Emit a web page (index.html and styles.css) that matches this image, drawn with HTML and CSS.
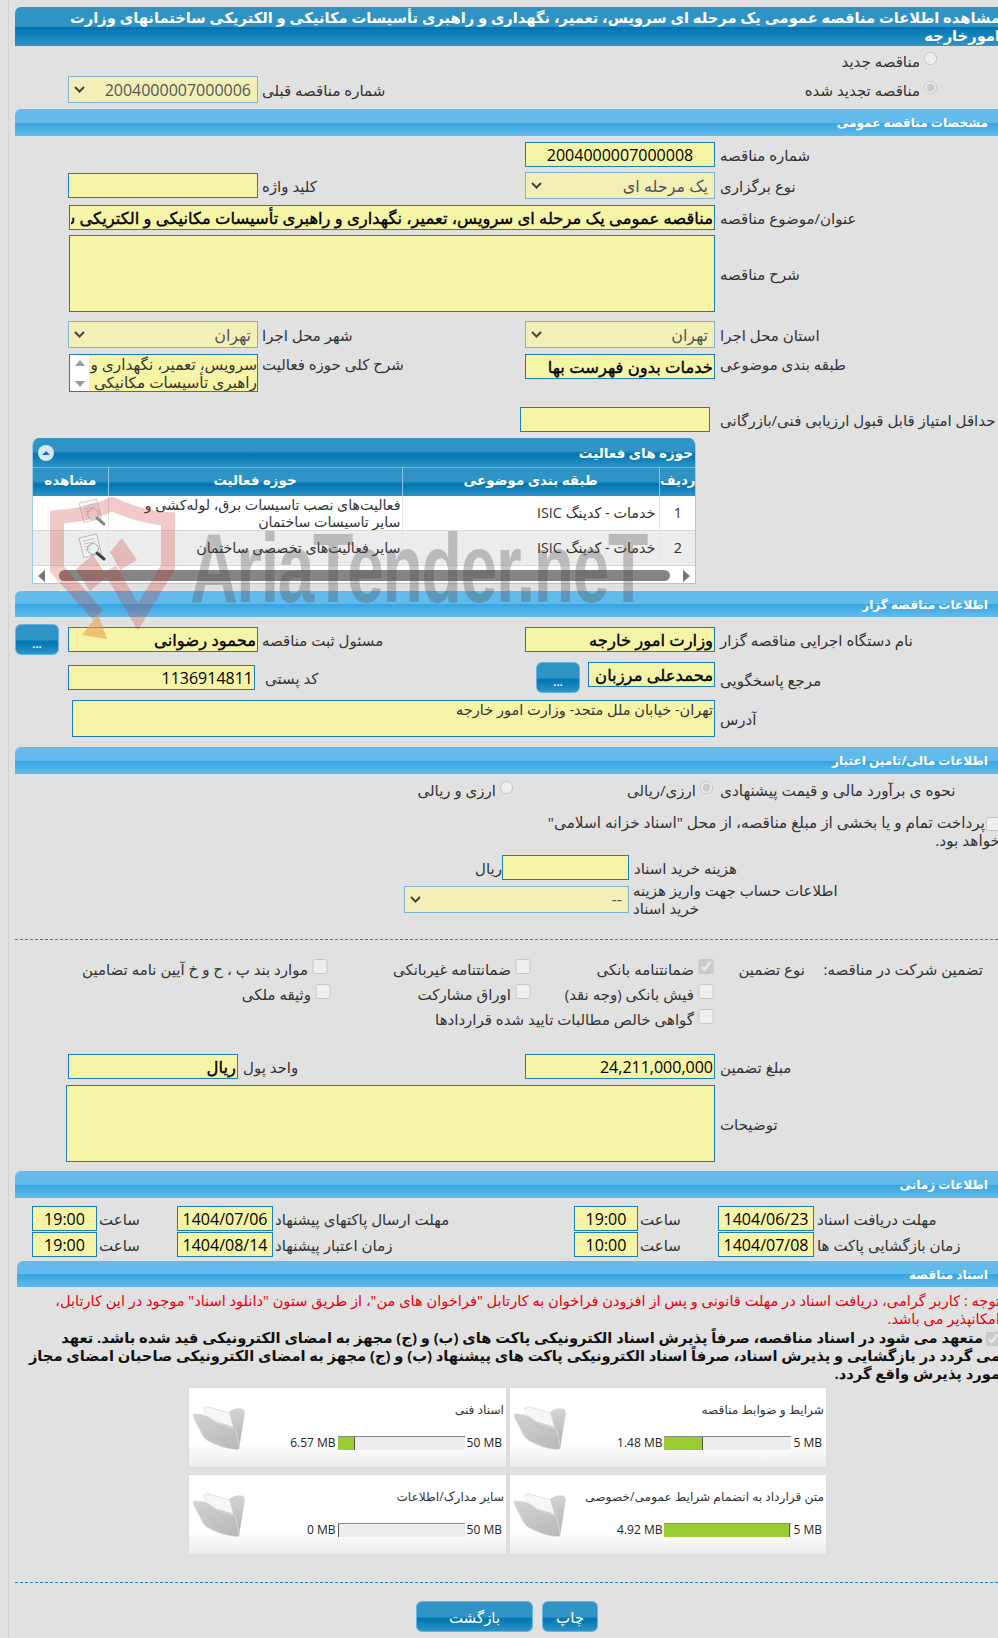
FILE: index.html
```html
<!DOCTYPE html>
<html lang="fa">

<head>
    <meta charset="UTF-8">
    <title>مشاهده اطلاعات مناقصه</title>
    <link rel="stylesheet" href="styles.css">
</head>

<body>
    <div class="page" dir="rtl">
        <h1 class="title-bar">مشاهده اطلاعات مناقصه عمومی یک مرحله ای سرویس، تعمیر، نگهداری و راهبری تأسیسات مکانیکی و الکتریکی ساختمانهای وزارت امورخارجه</h1>

        <div class="row row--tender-new">
            <label class="check"><input type="radio" name="kind" disabled>مناقصه جدید</label>
        </div>
        <div class="row row--tender-old">
            <div class="cell-r"><label class="check"><input type="radio" name="kind" checked disabled>مناقصه تجدید شده</label></div>
            <div class="cell-l">
                <span class="label">شماره مناقصه قبلی</span>
                <select class="field select w190" disabled><option>2004000007000006</option></select>
            </div>
        </div>

        <h2 class="section section--s1">مشخصات مناقصه عمومی</h2>
        <div class="row r-142">
            <div class="cell-r">
                <span class="label">شماره مناقصه</span>
                <input class="field w190 center" value="2004000007000008" readonly>
            </div>
        </div>
        <div class="row r-172">
            <div class="cell-r">
                <span class="label">نوع برگزاری</span>
                <select class="field select w190" disabled><option>یک مرحله ای</option></select>
            </div>
            <div class="cell-l">
                <span class="label">کلید واژه</span>
                <input class="field w190" readonly>
            </div>
        </div>
        <div class="row r-205">
            <span class="label">عنوان/موضوع مناقصه</span>
            <input class="field w646 bold" value="مناقصه عمومی یک مرحله ای سرویس، تعمیر، نگهداری و راهبری تأسیسات مکانیکی و الکتریکی ساختمانهای وزارت امورخارجه" readonly>
        </div>
        <div class="row r-235">
            <span class="label">شرح مناقصه</span>
            <textarea class="field w646 h77" readonly></textarea>
        </div>
        <div class="row r-321">
            <div class="cell-r">
                <span class="label">استان محل اجرا</span>
                <select class="field select w190" disabled><option>تهران</option></select>
            </div>
            <div class="cell-l">
                <span class="label">شهر محل اجرا</span>
                <select class="field select w190" disabled><option>تهران</option></select>
            </div>
        </div>
        <div class="row r-354">
            <div class="cell-r">
                <span class="label">طبقه بندی موضوعی</span>
                <input class="field w190 bold" value="خدمات بدون فهرست بها" readonly>
            </div>
            <div class="cell-l">
                <span class="label">شرح کلی حوزه فعالیت</span>
                <div class="listbox">
                    <div class="listbox__text">سرویس، تعمیر، نگهداری و راهبری تأسیسات مکانیکی و الکتریکی</div>
                    <div class="listbox__bar"><i class="tri-up"></i><i class="tri-down"></i></div>
                </div>
            </div>
        </div>
        <div class="row r-407">
            <span class="label">حداقل امتیاز قابل قبول ارزیابی فنی/بازرگانی</span>
            <input class="field w190 shift-5" readonly>
        </div>

        <div class="panel">
            <div class="panel__head">
                <span>حوزه های فعالیت</span>
                <span class="panel__toggle"><i></i></span>
            </div>
            <table class="grid">
                <thead>
                    <tr>
                        <th class="col-1">ردیف</th>
                        <th class="col-2">طبقه بندی موضوعی</th>
                        <th class="col-3">حوزه فعالیت</th>
                        <th class="col-4">مشاهده</th>
                    </tr>
                </thead>
                <tbody>
                    <tr>
                        <td class="num">1</td>
                        <td>خدمات - کدینگ ISIC</td>
                        <td class="desc">فعالیت‌های نصب تاسیسات برق، لوله‌کشی و سایر تاسیسات ساختمان</td>
                        <td class="view">
                            <svg class="doc-icon doc-icon--faint" viewBox="0 0 30 30"><use href="#doc"/></svg>
                        </td>
                    </tr>
                    <tr class="alt">
                        <td class="num">2</td>
                        <td>خدمات - کدینگ ISIC</td>
                        <td class="desc">سایر فعالیت‌های تخصصی ساختمان</td>
                        <td class="view">
                            <svg class="doc-icon" viewBox="0 0 30 30"><use href="#doc"/></svg>
                        </td>
                    </tr>
                </tbody>
            </table>
            <div class="hscroll">
                <i class="tri-left"></i>
                <div class="hscroll__thumb"></div>
                <i class="tri-right"></i>
            </div>
        </div>

        <h2 class="section section--s2">اطلاعات مناقصه گزار</h2>
        <div class="row r-624">
            <div class="cell-r">
                <span class="label">نام دستگاه اجرایی مناقصه گزار</span>
                <input class="field w190 bold" value="وزارت امور خارجه" readonly>
            </div>
            <div class="cell-l">
                <span class="label">مسئول ثبت مناقصه</span>
                <input class="field w190 bold" value="محمود رضوانی" readonly>
                <button class="btn btn--dots btn--outer">...</button>
            </div>
        </div>
        <div class="row r-662">
            <div class="cell-r cell-r--top">
                <span class="label label--mid">مرجع پاسخگویی</span>
                <input class="field w127 bold" value="محمدعلی مرزبان" readonly>
                <button class="btn btn--dots">...</button>
            </div>
            <div class="cell-l cell-l--down">
                <span class="label">کد پستی</span>
                <input class="field w187" value="1136914811" readonly>
            </div>
        </div>
        <div class="row r-700">
            <span class="label">آدرس</span>
            <textarea class="field w643 h37" readonly>تهران- خیابان ملل متحد- وزارت امور خارجه</textarea>
        </div>

        <h2 class="section section--s3">اطلاعات مالی/تامین اعتبار</h2>
        <div class="row r-780">
            <div class="cell-r">
                <span class="label">نحوه ی برآورد مالی و قیمت پیشنهادی</span>
                <label class="check"><input type="radio" name="cur" checked disabled>ارزی/ریالی</label>
            </div>
            <div class="cell-rest">
                <label class="check"><input type="radio" name="cur" disabled>ارزی و ریالی</label>
            </div>
        </div>
        <div class="treasury">
            <input type="checkbox" disabled>پرداخت تمام و یا بخشی از مبلغ مناقصه، از محل "اسناد خزانه اسلامی" خواهد بود.
        </div>
        <div class="row r-855">
            <span class="label label--wide">هزینه خرید اسناد</span>
            <input class="field w127" readonly>
            <span class="unit">ریال</span>
        </div>
        <div class="row r-881">
            <span class="label label--wide label--two">اطلاعات حساب جهت واریز هزینه خرید اسناد</span>
            <select class="field select w225" disabled><option>--</option></select>
        </div>

        <hr class="dash dash--g">

        <div class="guarantee">
            <div class="guarantee__head">
                <span class="guarantee__title">تضمین شرکت در مناقصه:</span>
                <span class="guarantee__type">نوع تضمین</span>
            </div>
            <div class="guarantee__opts">
                <div class="opt-row">
                    <label class="opt opt--1"><input type="checkbox" checked disabled>ضمانتنامه بانکی</label>
                    <label class="opt opt--2"><input type="checkbox" disabled>ضمانتنامه غیربانکی</label>
                    <label class="opt"><input type="checkbox" disabled>موارد بند پ ، ح و خ آیین نامه تضامین</label>
                </div>
                <div class="opt-row">
                    <label class="opt opt--1"><input type="checkbox" disabled>فیش بانکی (وجه نقد)</label>
                    <label class="opt opt--3"><input type="checkbox" disabled>اوراق مشارکت</label>
                    <label class="opt"><input type="checkbox" disabled>وثیقه ملکی</label>
                </div>
                <div class="opt-row">
                    <label class="opt"><input type="checkbox" disabled>گواهی خالص مطالبات تایید شده قراردادها</label>
                </div>
            </div>
        </div>

        <div class="row r-1054">
            <div class="cell-r">
                <span class="label">مبلغ تضمین</span>
                <input class="field w190" value="24,211,000,000" readonly>
            </div>
            <div class="cell-l">
                <span class="label label--short">واحد پول</span>
                <input class="field w170 bold" value="ریال" readonly>
            </div>
        </div>
        <div class="row r-1085">
            <span class="label">توضیحات</span>
            <textarea class="field w649 h77" readonly></textarea>
        </div>

        <h2 class="section section--s4">اطلاعات زمانی</h2>
        <div class="row r-1206">
            <div class="time time--a">
                <span class="time__label">مهلت دریافت اسناد</span>
                <input class="field w96 center" value="1404/06/23" readonly>
                <span class="time__hour">ساعت</span>
                <input class="field w64 center" value="19:00" readonly>
            </div>
            <div class="time time--b">
                <span class="time__label">مهلت ارسال پاکتهای پیشنهاد</span>
                <input class="field w96 center" value="1404/07/06" readonly>
                <span class="time__hour">ساعت</span>
                <input class="field w65 center" value="19:00" readonly>
            </div>
        </div>
        <div class="row r-1232">
            <div class="time time--a">
                <span class="time__label">زمان بازگشایی پاکت ها</span>
                <input class="field w96 center" value="1404/07/08" readonly>
                <span class="time__hour">ساعت</span>
                <input class="field w64 center" value="10:00" readonly>
            </div>
            <div class="time time--b">
                <span class="time__label">زمان اعتبار پیشنهاد</span>
                <input class="field w96 center" value="1404/08/14" readonly>
                <span class="time__hour">ساعت</span>
                <input class="field w65 center" value="19:00" readonly>
            </div>
        </div>

        <h2 class="section section--s5">اسناد مناقصه</h2>
        <p class="notice">توجه : کاربر گرامی، دریافت اسناد در مهلت قانونی و پس از افزودن فراخوان به کارتابل "فراخوان های من"، از طریق ستون "دانلود اسناد" موجود در این کارتابل، امکانپذیر می باشد.</p>
        <p class="pledge"><input type="checkbox" checked disabled>متعهد می شود در اسناد مناقصه، صرفاً پذیرش اسناد الکترونیکی پاکت های (ب) و (ج) مجهز به امضای الکترونیکی قید شده باشد. تعهد می&nbsp;گردد در بازگشایی و پذیرش اسناد، صرفاً اسناد الکترونیکی پاکت های پیشنهاد (ب) و (ج) مجهز به امضای الکترونیکی صاحبان امضای مجاز مورد پذیرش واقع گردد.</p>

        <div class="cards">
            <div class="card">
                <div class="card__title">شرایط و ضوابط مناقصه</div>
                <div class="card__meter">
                    <span>5 MB</span>
                    <div class="meter"><div class="meter__fill" style="width: 29.6%"></div></div>
                    <span>1.48 MB</span>
                </div>
                <svg class="folder" viewBox="0 0 156 133"><use href="#folder"/></svg>
            </div>
            <div class="card">
                <div class="card__title">اسناد فنی</div>
                <div class="card__meter">
                    <span>50 MB</span>
                    <div class="meter"><div class="meter__fill" style="width: 13.1%"></div></div>
                    <span>6.57 MB</span>
                </div>
                <svg class="folder" viewBox="0 0 156 133"><use href="#folder"/></svg>
            </div>
            <div class="card">
                <div class="card__title">متن قرارداد به انضمام شرایط عمومی/خصوصی</div>
                <div class="card__meter">
                    <span>5 MB</span>
                    <div class="meter"><div class="meter__fill" style="width: 98.4%"></div></div>
                    <span>4.92 MB</span>
                </div>
                <svg class="folder" viewBox="0 0 156 133"><use href="#folder"/></svg>
            </div>
            <div class="card">
                <div class="card__title">سایر مدارک/اطلاعات</div>
                <div class="card__meter">
                    <span>50 MB</span>
                    <div class="meter"><div class="meter__fill" style="width: 0"></div></div>
                    <span>0 MB</span>
                </div>
                <svg class="folder" viewBox="0 0 156 133"><use href="#folder"/></svg>
            </div>
        </div>

        <hr class="dash dash--b">

        <div class="actions">
            <button class="btn btn--print">چاپ</button>
            <button class="btn btn--back">بازگشت</button>
        </div>
    </div>

    <svg class="defs" width="0" height="0">
        <defs>
            <linearGradient id="folder-back" x1="0" y1="0" x2="0" y2="1">
                <stop offset="0" stop-color="#d6d6d6"/>
                <stop offset="1" stop-color="#b0b0b0"/>
            </linearGradient>
            <linearGradient id="folder-front" x1="0" y1="0" x2="1" y2="1">
                <stop offset="0" stop-color="#d2d2d2"/>
                <stop offset="1" stop-color="#b8b8b8"/>
            </linearGradient>
            <g id="folder">
                <path d="M33 10Q38 2 50 5L108 22Q125 8 145 10 158 12 155 28L140 122Q136 132 130 128Z" fill="url(#folder-back)"/>
                <path d="M35 10Q40 4 50 7L110 24 122 65 40 40Z" fill="#f6f6f6" stroke="#dedede"/>
                <path d="M3 30Q-2 26 8 26L30 28Q45 30 60 42 80 60 120 68 128 70 130 80L140 125Q140 134 130 132 90 130 45 105 35 98 30 88L5 40Z" fill="url(#folder-front)" stroke="#e6e6e6" stroke-width="2"/>
            </g>
            <g id="doc">
                <g transform="rotate(-14 12 12)">
                    <rect x="4" y="3" width="18" height="20" fill="#f4f4f4" stroke="#b9b9b9"/>
                    <path d="M7 7h12M7 10h12M7 13h8M7 16h6" stroke="#bdbdbd"/>
                </g>
                <circle cx="16" cy="16" r="5.500" fill="#e8eef0" fill-opacity=".6" stroke="#a5a5a5"/>
                <path d="M20 20l7 6" stroke="#444" stroke-width="3" stroke-linecap="round"/>
            </g>
        </defs>
    </svg>

    <!-- site watermark, lies over the form -->
    <div class="watermark">
        <svg class="watermark__shield" viewBox="0 0 130 145">
            <path d="M48 118L7 72V20Q40 18 62 7 90 20 118 22V70L88 120 60 72" fill="none" stroke="#c8201f" stroke-opacity=".24" stroke-width="14"/>
            <path d="M48 117l9 25-25-4z" fill="#e6a050" fill-opacity=".6"/>
            <path d="M26 72l17-14 14 22-17 14zM60 55l12-14 15 22-17 10z" fill="#c8201f" fill-opacity=".25"/>
        </svg>
        <span class="watermark__text">AriaTender.neT</span>
    </div>
</body>

</html>
```

FILE: styles.css
```css
html,
body {
    margin: 0;
    padding: 0;
    overflow: hidden;
}

body {
    width: 998px;
    height: 1638px;
    position: relative;
    background: #e1e1e1;
    font-family: "Open Sans", "DejaVu Sans", sans-serif;
    font-size: 15px;
    line-height: 20px;
    color: #333;
}

/* thin stripe along the left side of the page */
body::before {
    content: "";
    position: absolute;
    left: 8px;
    top: 0;
    bottom: 0;
    width: 1px;
    background: #d2d2d2;
}

.page {
    width: 988px;
    height: 1638px;
    margin-left: 15px;
    padding-top: 7px;
    box-sizing: border-box;
}

.defs {
    position: absolute;
}

.title-bar {
    margin: 0;
    height: 39px;
    padding: 1px 3px 0 0;
    box-sizing: border-box;
    border-radius: 6px 0 0 0;
    background: linear-gradient(#2f93c5 0, #2f93c5 50%, #0075b2 52%, #2f93c5 100%);
    color: #fff;
    font-size: 14.7px;
    line-height: 18px;
    font-weight: bold;
}

.section {
    margin: 0;
    height: 27px;
    padding: 0 15px 0 0;
    box-sizing: border-box;
    border-radius: 6px 0 0 0;
    background: linear-gradient(#63bbec 0, #63bbec 50%, #36a5e2 52%, #63bbec 100%);
    color: #fff;
    font-size: 12.1px;
    line-height: 27px;
    font-weight: bold;
}

.section--s1 { margin-top: 6px; }
.section--s2 { margin-top: 7px; height: 26px; }
.section--s3 { margin-top: 10px; }
.section--s4 { margin-top: 9px; }
.section--s5 { margin-top: 4px; margin-left: 2px; height: 26px; }

.row {
    display: flex;
    width: 988px;
    align-items: center;
}

.row--tender-new { height: 20px; margin-top: 5px; }
.row--tender-old { height: 27px; margin-top: 5px; }
.r-142 { margin-top: 6px; }
.r-172 { margin-top: 5px; }
.r-205 { margin-top: 6px; }
.r-235 { margin-top: 5px; }
.r-321 { margin-top: 9px; }
.r-354 { margin-top: 6px; align-items: flex-start; }
.r-407 { margin-top: 15px; }
.r-624 { margin-top: 7px; }
.r-662 { margin-top: 7px; align-items: flex-start; }
.r-700 { margin-top: 7px; }
.r-780 { margin-top: 6px; height: 20px; }
.r-855 { margin-top: 6px; }
.r-881 { margin-top: 1px; }
.r-1054 { margin-top: 23px; }
.r-1085 { margin-top: 6px; }
.r-1206 { margin-top: 8px; }
.r-1232 { margin-top: 1px; }

.cell-r {
    display: flex;
    align-items: center;
    width: 478px;
    flex: none;
}

.cell-r--top,
.r-354 .cell-r,
.r-354 .cell-l {
    align-items: flex-start;
}

.cell-l {
    display: flex;
    align-items: center;
    width: 510px;
}

.cell-l--down {
    margin-top: 3px;
}

.cell-rest {
    display: flex;
    align-items: center;
    padding-right: 12px;
}

.label {
    width: 288px;
    flex: none;
    padding: 1px 0 0 5px;
    box-sizing: border-box;
    text-align: left;
    white-space: nowrap;
}

.cell-l .label {
    width: 267px;
    padding-left: 4px;
}

.r-354 .label,
.r-780 .label {
    padding-top: 0;
}

.r-780 .label {
    font-size: 15.3px;
}

.cell-l .label--short {
    width: 287px;
    padding-left: 5px;
}

.cell-l--down .label {
    width: 270px;
    padding-left: 10px;
}

.label--mid {
    margin-top: 7px;
}

.label--wide {
    width: 374px;
}

.label--two {
    padding: 0 153px 0 4px;
    white-space: normal;
    line-height: 18px;
}

.field {
    flex: none;
    box-sizing: border-box;
    height: 25px;
    padding: 0 1px;
    margin: 0;
    border: 1px solid #1b7fb5;
    border-radius: 0;
    background: #f6f4a6;
    color: #000;
    font-family: "Open Sans", "DejaVu Sans", sans-serif;
    font-size: 16px;
    outline: none;
    resize: none;
    overflow: hidden;
}

textarea.field {
    font-size: 14.5px;
    line-height: 17px;
    color: #333;
}

.select {
    height: 27px;
    padding-right: 6px;
    border-color: #7fb2cf;
    background: #f2efb7 url("data:image/svg+xml,%3Csvg xmlns='http://www.w3.org/2000/svg' width='11' height='7'%3E%3Cpath d='M1 1l4.500 4.500L10 1' fill='none' stroke='%23444' stroke-width='2'/%3E%3C/svg%3E") no-repeat 5px 50%;
    color: #555;
    opacity: 1;
    appearance: none;
}

.w64 { width: 64px; }
.w65 { width: 65px; }
.w96 { width: 96px; }
.w127 { width: 127px; }
.w170 { width: 170px; }
.w187 { width: 187px; }
.w190 { width: 190px; }
.w225 { width: 225px; }
.w643 { width: 643px; }
.w646 { width: 646px; }
.w649 { width: 649px; }
.h37 { height: 37px; }
.h77 { height: 77px; }

.center {
    text-align: center;
}

.bold {
    font-size: 16.4px;
    -webkit-text-stroke: .35px #000;
}

.shift-5 {
    margin-right: 5px;
}

.check {
    display: flex;
    align-items: center;
    white-space: nowrap;
}

.check input {
    margin: 0 0 5px 4px;
    width: 13px;
    height: 13px;
}

.row--tender-new .check,
.row--tender-old .check {
    padding-right: 66px;
}

.r-780 .cell-r .check {
    padding-right: 2px;
}

.listbox {
    display: flex;
    box-sizing: border-box;
    width: 189px;
    height: 38px;
    border: 1px solid #1b7fb5;
    background: #fff;
    overflow: hidden;
}

.listbox__text {
    flex: 1;
    height: 36px;
    background: #f6f4a6;
    font-size: 15.3px;
    line-height: 18px;
    overflow: hidden;
}

.listbox__bar {
    width: 19px;
    flex: none;
    display: flex;
    flex-direction: column;
    justify-content: space-between;
    align-items: center;
    padding: 5px 0 4px;
    box-sizing: border-box;
}

.tri-up {
    border: 5px solid transparent;
    border-top: 0;
    border-bottom: 6px solid #999;
}

.tri-down {
    border: 5px solid transparent;
    border-bottom: 0;
    border-top: 6px solid #999;
}

.panel {
    width: 664px;
    height: 146px;
    margin: 6px 307px 0 0;
    box-sizing: border-box;
    border: 1px solid #9ccbe6;
    border-top: 0;
    border-radius: 7px 7px 0 0;
    background: #fff;
    overflow: hidden;
}

.panel__head {
    display: flex;
    justify-content: space-between;
    align-items: center;
    height: 29px;
    padding: 0 3px 0 6px;
    margin: 0 -1px;
    background: linear-gradient(#2f93c5 0, #2f93c5 45%, #0075b2 55%, #2f93c5 100%);
    color: #fff;
    font-size: 13.5px;
    font-weight: bold;
}

.panel__toggle {
    display: flex;
    justify-content: center;
    align-items: center;
    width: 16px;
    height: 16px;
    border-radius: 50%;
    background: #d9e8f2;
}

.panel__toggle i {
    border: 4px solid transparent;
    border-top: 0;
    border-bottom: 4px solid #1672a6;
}

.grid {
    width: 664px;
    margin-right: -1px;
    border-collapse: collapse;
    table-layout: fixed;
    font-size: 14.4px;
}

.grid th {
    box-sizing: border-box;
    height: 28px;
    padding: 0 0 4px;
    background: linear-gradient(#2f93c5 0, #2f93c5 45%, #0075b2 55%, #2f93c5 100%);
    border-top: 1px solid #6db3d9;
    border-left: 1px solid #8cc6e6;
    color: #fff;
    font-size: 13.4px;
}

.grid .col-1 { width: 37px; }
.grid .col-2 { width: 257px; }
.grid .col-3 { width: 294px; }

.grid td {
    padding: 0 3px;
    height: 34px;
    line-height: 17px;
    border-left: 1px solid #e6e6e6;
    border-bottom: 1px solid #dcdcdc;
}

.grid .num {
    text-align: center;
}

.grid .desc {
    padding: 0 1px 0 14px;
    font-size: 14.2px;
}

.grid .alt td {
    background: #ececec;
}

.grid .view {
    padding: 0 1px 0 0;
    border-left: 0;
}

.doc-icon {
    display: block;
    width: 30px;
    height: 30px;
    margin: 0 0 0 auto;
}

.doc-icon--faint {
    opacity: .65;
}

.hscroll {
    display: flex;
    align-items: center;
    justify-content: space-between;
    height: 20px;
    padding: 0 5px;
    direction: ltr;
}

.hscroll__thumb {
    width: 611px;
    height: 11px;
    border-radius: 6px;
    background: #858585;
}

.tri-right {
    border: 6px solid transparent;
    border-right: 0;
    border-left: 7px solid #777;
}

.tri-left {
    border: 6px solid transparent;
    border-left: 0;
    border-right: 7px solid #777;
}

.btn {
    flex: none;
    box-sizing: border-box;
    height: 31px;
    padding: 0;
    border: 1px solid #62b6e3;
    border-radius: 6px;
    background: linear-gradient(#2f93c5 0, #2f93c5 50%, #0075b2 58%, #2f93c5 100%);
    color: #fff;
    font-family: "Open Sans", "DejaVu Sans", sans-serif;
    font-size: 15px;
}

.btn--dots {
    width: 44px;
    margin-right: 8px;
    padding-top: 8px;
    line-height: 14px;
    font-weight: bold;
    font-size: 11px;
}

.btn--outer {
    margin-right: 9px;
}

.treasury {
    width: 470px;
    height: 36px;
    margin: 13px 3px 0 0;
    font-size: 15.3px;
    line-height: 18px;
}

.treasury input {
    margin: 0 0 0 1px;
    width: 14px;
    height: 14px;
    vertical-align: middle;
}

.unit {
    white-space: nowrap;
}

.dash {
    border: 0;
    margin: 0;
    height: 0;
    border-top: 1px dashed #2d7fae;
}

.dash--g { margin-top: 22px; }
.dash--b { margin-top: 28px; }

.guarantee {
    display: flex;
    height: 75px;
    margin-top: 16px;
}

.guarantee__head {
    display: flex;
    width: 289px;
    flex: none;
    height: 25px;
    align-items: center;
}

.guarantee__title {
    width: 198px;
    padding-right: 20px;
    box-sizing: border-box;
    white-space: nowrap;
}

.guarantee__type {
    white-space: nowrap;
}

.opt-row {
    display: flex;
    height: 25px;
    align-items: center;
}

.opt {
    display: flex;
    align-items: center;
    white-space: nowrap;
}

.opt input {
    margin: 0 0 5px 4px;
    width: 16px;
    height: 15px;
}

.opt--1 { width: 183px; }
.opt--2 { width: 203px; }
.opt--3 { width: 200px; }

.time {
    display: flex;
    align-items: center;
    flex: none;
}

.time__label {
    flex: none;
    padding-top: 1px;
    text-align: left;
    box-sizing: border-box;
    white-space: nowrap;
}

.time--a .time__label {
    width: 189px;
    padding-left: 3px;
}

.time--b .time__label {
    width: 301px;
    padding-left: 2px;
}

.time__hour {
    width: 80px;
    flex: none;
    padding: 1px 0 0 2px;
    text-align: left;
    box-sizing: border-box;
}

.notice {
    width: 983px;
    margin: 4px 3px 0 0;
    color: #e8000d;
    font-size: 14.6px;
    line-height: 18px;
}

.pledge {
    width: 983px;
    margin: 1px 3px 0 0;
    color: #111;
    font-size: 14.7px;
    font-weight: bold;
    line-height: 18px;
}

.pledge input {
    margin: 0 0 0 3px;
    width: 14px;
    height: 14px;
    vertical-align: middle;
}

.cards {
    display: grid;
    grid-template-columns: 316px 317px;
    grid-auto-rows: 79px;
    gap: 8px 4px;
    margin: 6px 177px 0 0;
}

.card {
    position: relative;
    padding: 12px 2px 0 0;
    box-sizing: border-box;
    background: linear-gradient(#fff 0, #fff 70%, #ececec 100%);
    box-shadow: 0 0 2px #cfcfcf;
    font-size: 12.2px;
}

.card__title {
    height: 35px;
    white-space: nowrap;
}

.card__meter {
    display: flex;
    align-items: center;
    height: 16px;
    padding-right: 2px;
    font-size: 12px;
    color: #222;
}

.card__meter span {
    white-space: nowrap;
    direction: ltr;
}

.meter {
    width: 127px;
    height: 14px;
    flex: none;
    margin: 0 2px;
    box-sizing: border-box;
    border-top: 1px solid #888;
    background: #ececec;
    direction: ltr;
}

.meter__fill {
    height: 13px;
    border-right: 1px solid #555;
    background: #9acd32;
}

/* folder sits at the left of the card */
.folder {
    position: absolute;
    left: 3px;
    top: 17px;
    width: 53px;
    height: 45px;
    filter: blur(.4px);
}

.actions {
    display: flex;
    margin: 18px 405px 0 0;
    gap: 9px;
}

.btn--print { width: 56px; }
.btn--back { width: 117px; }

.watermark {
    position: absolute;
    left: 50px;
    top: 497px;
    width: 620px;
    height: 145px;
    pointer-events: none;
}

.watermark__shield {
    position: absolute;
    left: 0;
    top: 0;
    width: 130px;
    height: 145px;
}

.watermark__text {
    position: absolute;
    left: 140px;
    top: 22px;
    font-family: "Liberation Sans", sans-serif;
    font-weight: bold;
    font-size: 98px;
    line-height: 98px;
    letter-spacing: -2px;
    color: rgba(70, 70, 70, .3);
    transform: scaleX(.674);
    transform-origin: left top;
    white-space: nowrap;
}
```
